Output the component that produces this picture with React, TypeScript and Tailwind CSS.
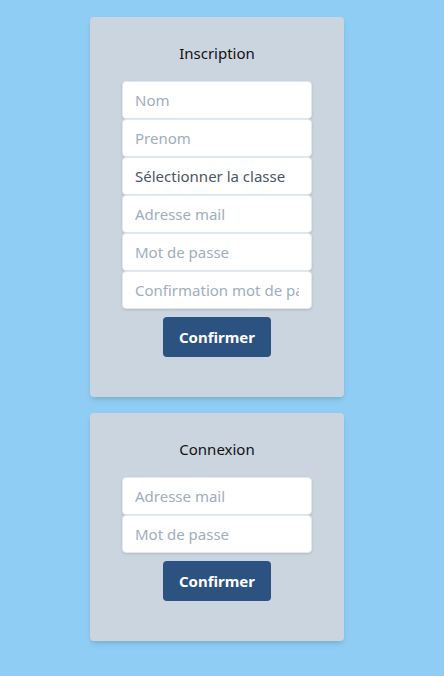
import React from "react";

const inputCls =
  "block w-full h-[38px] bg-white border border-[#e2e8f0] rounded px-3 text-[15px] text-[#4a5568] placeholder:text-[#a0aec0] shadow-sm outline-none";

function Button() {
  return (
    <button className="mt-2 h-[40px] px-4 rounded bg-[#2c5282] text-white font-bold text-[15px]">
      Confirmer
    </button>
  );
}

export default function App() {
  return (
    <div
      className="min-h-[676px] w-full bg-[#90cdf4] pt-[17px]"
      style={{ fontFamily: '"Noto Sans", "Open Sans", sans-serif' }}
    >
      <div className="ml-[90px] w-[254px] flex flex-col gap-4">
        <div className="bg-[#cbd5e0] rounded shadow-md px-8 pt-6 pb-10 flex flex-col items-center">
          <h2 className="text-[15px] leading-6 text-[#111] mb-4">Inscription</h2>
          <div className="w-full flex flex-col">
            <input className={inputCls} placeholder="Nom" />
            <input className={inputCls} placeholder="Prenom" />
            <select className={inputCls + " appearance-none"} defaultValue="">
              <option value="">Sélectionner la classe</option>
            </select>
            <input className={inputCls} placeholder="Adresse mail" />
            <input className={inputCls} placeholder="Mot de passe" type="password" />
            <input className={inputCls} placeholder="Confirmation mot de passe" type="password" />
          </div>
          <Button />
        </div>
        <div className="bg-[#cbd5e0] rounded shadow-md px-8 pt-6 pb-10 flex flex-col items-center">
          <h2 className="text-[15px] leading-6 text-[#111] mb-4">Connexion</h2>
          <div className="w-full flex flex-col">
            <input className={inputCls} placeholder="Adresse mail" />
            <input className={inputCls} placeholder="Mot de passe" type="password" />
          </div>
          <Button />
        </div>
      </div>
    </div>
  );
}
